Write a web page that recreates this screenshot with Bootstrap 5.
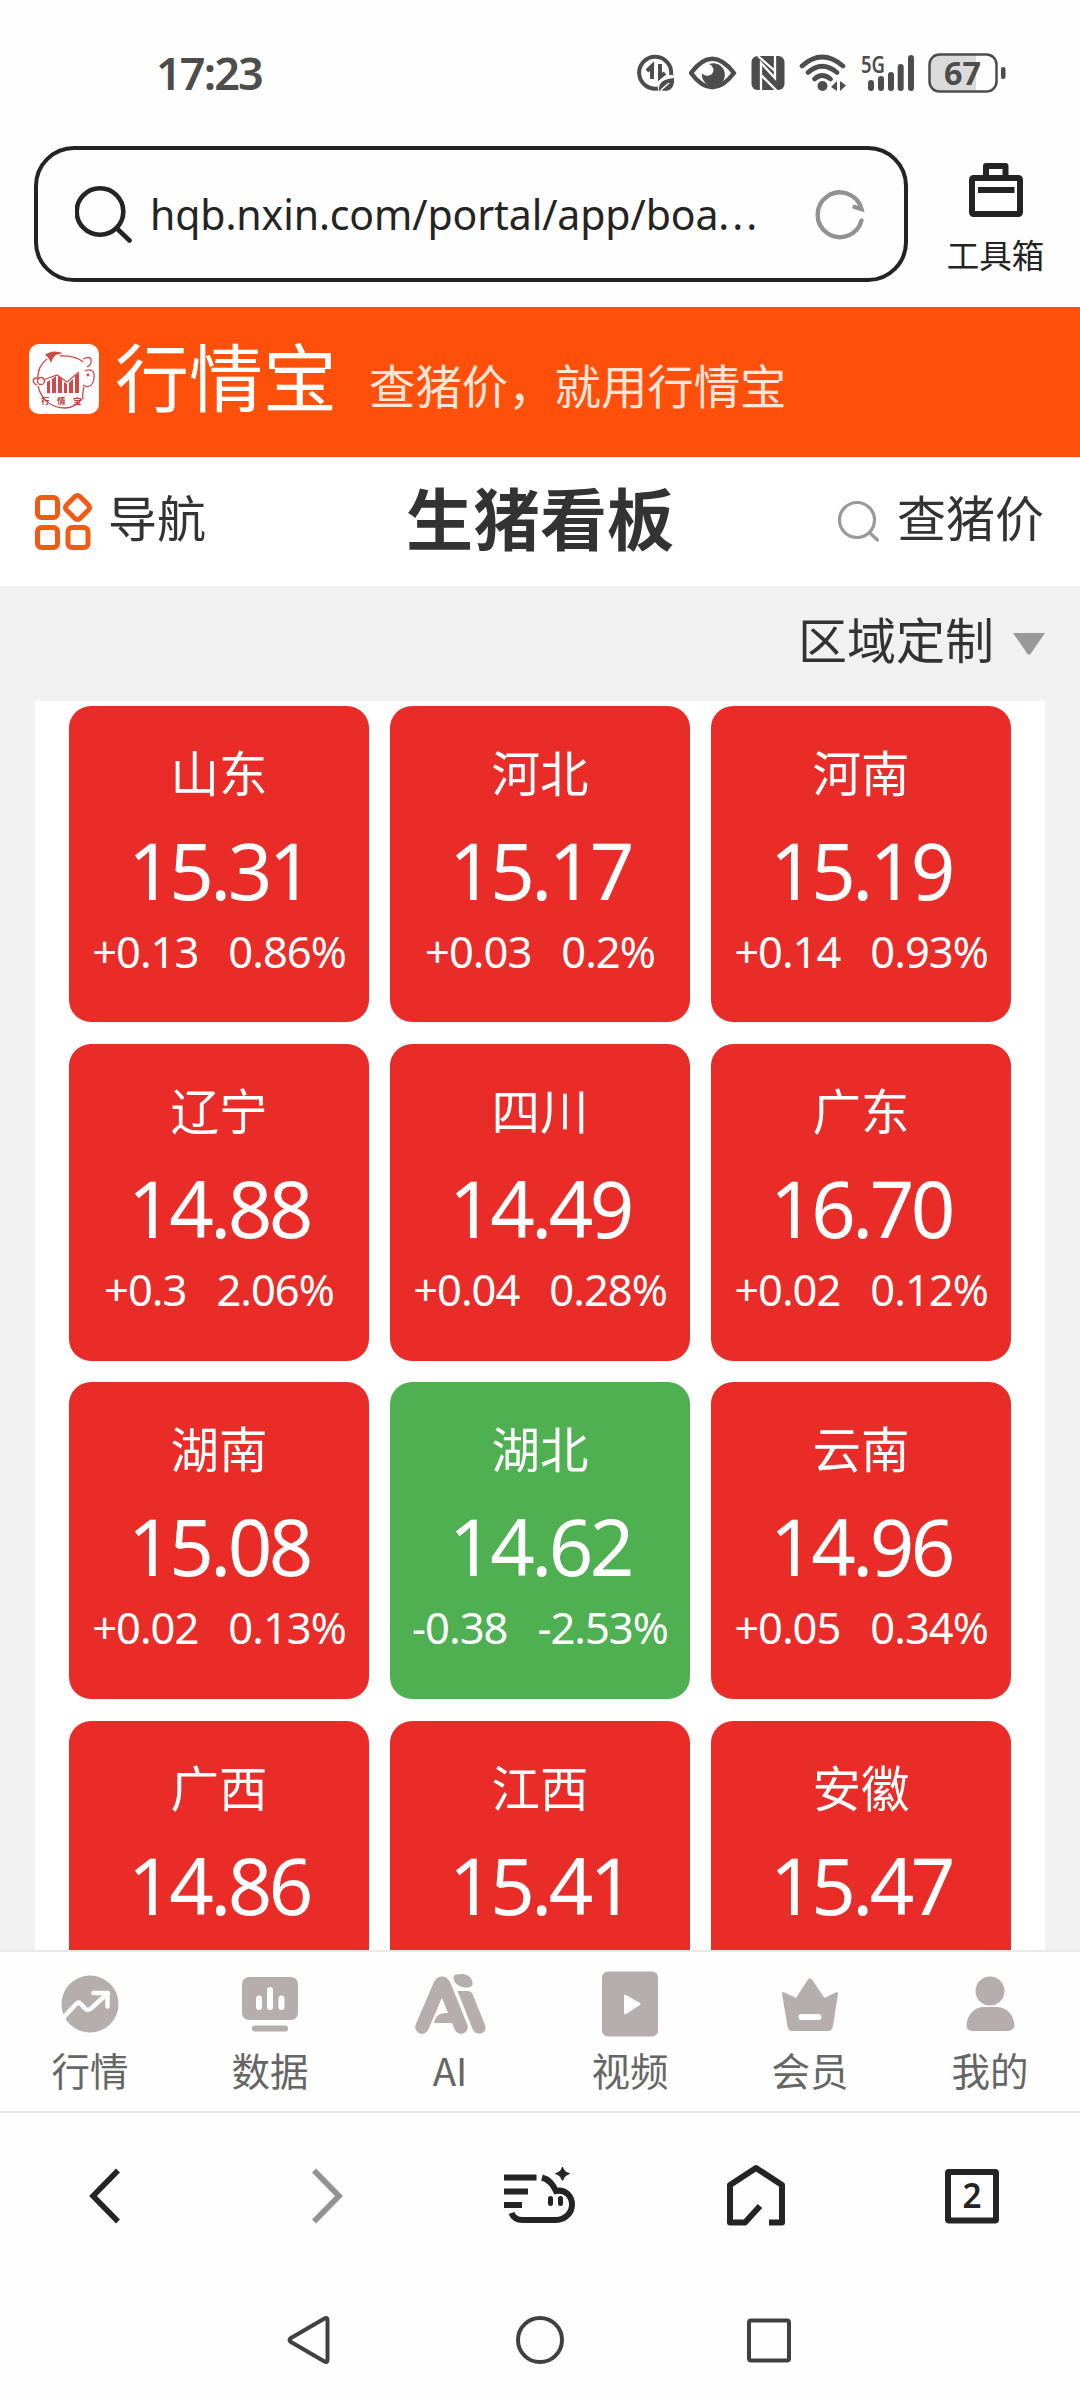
<!DOCTYPE html>
<html lang="zh-CN">
<head>
<meta charset="utf-8">
<meta name="viewport" content="width=device-width, initial-scale=1">
<title>行情宝 - 生猪看板</title>
<link rel="stylesheet" href="https://cdn.jsdelivr.net/npm/bootstrap@5.3.0/dist/css/bootstrap.min.css">
<style>
  body { width: 1080px; height: 2400px; overflow: hidden; background: #fefefe; color: #333; font-family: "Noto Sans CJK SC", sans-serif; }
  svg { display: block; flex: none; }
  .latin { font-family: "Noto Sans", "Noto Sans CJK SC", sans-serif; }
  .status-bar { height: 146px; padding: 42px 74px 0 156px; color: #4d4d4d; }
  .status-bar .clock { font-size: 45px; line-height: 62px; font-weight: 600; letter-spacing: -1.9px; }
  .status-icons { gap: 14px; }
  .address-row { height: 161px; padding-left: 34px; color: #242424; }
  .address-box { width: 874px; height: 136px; border: 4.5px solid #242424; border-radius: 40px; padding: 0 39px 0 36.5px; }
  .address-box .url { font-size: 41px; line-height: 60px; margin-left: 17.5px; margin-top: -1px; letter-spacing: -.1px; white-space: nowrap; }
  .address-box .more { letter-spacing: 3px; }
  .toolbox { width: 96px; margin-left: 39.5px; padding-top: 16px; font-size: 32.5px; line-height: 40px; }
  .brand-bar { height: 150px; background: #ff500b; padding: 0 0 7px 29px; }
  .brand-name { font-size: 74px; line-height: 80px; color: #fff; margin-left: 16px; margin-top: -10px; }
  .slogan { font-size: 46.4px; line-height: 60px; color: #ffe5da; margin-left: 32px; margin-top: 10px; white-space: nowrap; }
  .title-bar { height: 129px; padding: 0 36px 0 34px; background: #fff; font-size: 49px; }
  .title-bar .side { width: 250px; line-height: 60px; }
  .title-bar .side span { margin-top: -11px; }
  .board-title { font-size: 67px; line-height: 80px; font-weight: 700; margin: -12px 0 0 2px; }
  .board { height: 1364px; background: #f1f1f1; overflow: hidden; }
  .region { height: 115px; padding-right: 35px; font-size: 49px; line-height: 60px; }
  .region span { margin: -12px 19px 0 0; }
  .panel { margin: 0 35px; padding: 4.7px 34px 0; background: #fff; }
  .tiles { display: grid; grid-template-columns: repeat(3, 300px); grid-auto-rows: 316.8px; gap: 21.5px 21px; }
  .tile { background: #e92c27; color: #fff; border-radius: 22px; padding-top: 30px; text-align: center; white-space: nowrap; }
  .tile.down { background: #4eb051; }
  .tile .area { font-size: 48.5px; line-height: 70px; }
  .tile .price { font-size: 78px; line-height: 96px; margin-top: 16px; letter-spacing: -3.5px; }
  .tile .delta { font-size: 43.5px; line-height: 60px; margin-top: 3px; letter-spacing: -1px; gap: 30px; }
  .tab-bar { height: 163px; background: #fefefe; border-top: 2px solid #e9e9e9; border-bottom: 2px solid #e9e9e9; color: #666; font-size: 38.5px; line-height: 50px; }
  .tab-bar svg { margin-top: 15px; margin-bottom: 7px; }
  .browser-bar { height: 166px; }
  .system-bar { height: 121px; padding: 0 272px 0 271px; }
</style>
</head>
<body class="d-flex flex-column">

<div class="status-bar d-flex align-items-start justify-content-between flex-shrink-0">
  <span class="clock latin">17:23</span>
  <div class="status-icons d-flex">
    <svg width="38" height="62" viewBox="637 42 38 62" fill="none" stroke="#4d4d4d" stroke-width="4">
      <path d="M658 88.5A16 16 0 1 1 671 75"/>
      <path d="M647 71L652 66V79M660 64V77L665 73" stroke-width="4"/>
      <path d="M659 91C658 82 664 79 674 78C675 88 669 93 661 90Z" fill="#4d4d4d" stroke="none"/>
      <path d="M661 90L669 83" stroke="#fff" stroke-width="1.5"/>
    </svg>
    <svg width="48" height="62" viewBox="689 42 48 62">
      <path d="M691 73Q712 44.500 734 73Q712 101.500 691 73Z" fill="none" stroke="#4d4d4d" stroke-width="4.500" stroke-linejoin="round"/>
      <path d="M709 64A11.500 11.500 0 1 1 702 73C704 76 708 77 712 74C715 70 713 66 709 64Z" fill="#4d4d4d"/>
    </svg>
    <svg width="34" height="62" viewBox="751 42 34 62">
      <rect x="751.500" y="56" width="33" height="34" rx="6" fill="#4d4d4d"/>
      <path d="M761 90V63L775 78V56" fill="none" stroke="#fff" stroke-width="2.300"/>
      <path d="M758 56L775 71M761 75L777 91" stroke="#fff" stroke-width="2.300"/>
    </svg>
    <svg width="48" height="62" viewBox="799 42 48 62" fill="none" stroke="#4d4d4d" stroke-width="4.600" stroke-linecap="round">
      <path d="M802 66Q822 48 843 66M808 72.500Q822 60 837 72.500M814.500 79Q822 72 830.500 79"/>
      <circle cx="822.500" cy="86" r="5" fill="#4d4d4d" stroke="none"/>
      <path d="M831 87L837 81V91M840 81V91L846 85.500Z" fill="#4d4d4d" stroke="none"/>
    </svg>
    <svg width="53" height="62" viewBox="861 42 53 62">
      <g stroke="#4d4d4d" stroke-width="6" stroke-linecap="round"><path d="M871 83V88M881 79V88M891 75V88M900.700 67V88M911 58V88"/></g>
      <text x="861" y="72.500" font-family="Noto Sans" font-size="23.500" font-weight="600" fill="#4d4d4d" textLength="24" lengthAdjust="spacingAndGlyphs">5G</text>
    </svg>
    <svg width="78" height="62" viewBox="928 42 78 62">
      <path d="M939 55H976V91H939Q930 91 930 81V65Q930 55 939 55Z" fill="#dadada"/>
      <rect x="929.500" y="54.500" width="67" height="37" rx="10" fill="none" stroke="#4d4d4d" stroke-width="2.500"/>
      <rect x="1001" y="67" width="4.500" height="12" rx="2" fill="#4d4d4d"/>
      <text x="944" y="84.500" font-family="Noto Sans" font-size="33" font-weight="700" fill="#4d4d4d" textLength="37" lengthAdjust="spacingAndGlyphs">67</text>
    </svg>
  </div>
</div>

<div class="address-row d-flex align-items-start flex-shrink-0">
  <div class="address-box d-flex align-items-center">
    <svg width="58" height="58" viewBox="75 186 58 58" fill="none" stroke="#242424" stroke-width="4.600" stroke-linecap="round"><circle cx="100" cy="212.500" r="23.300"/><path d="M118 230.500L129.500 241.500"/></svg>
    <span class="url latin">hqb.nxin.com/portal/app/boa<span class="more">...</span></span>
    <svg class="ms-auto" width="50" height="52" viewBox="815 188 50 52" fill="none" stroke="#929292" stroke-width="4.400" stroke-linecap="round"><path d="M861.500 220.500A22.300 22.300 0 1 1 861.500 209L854.500 207"/></svg>
  </div>
  <div class="toolbox d-flex flex-column align-items-center text-nowrap">
    <svg width="56" height="56" viewBox="968 162 56 56" fill="none" stroke="#242424" stroke-width="6"><rect x="972" y="178" width="48" height="36" rx="1.500"/><path d="M978 190H1014.500M986 177V166H1005.500V177" stroke-linejoin="round"/></svg>
    <span class="mt-3">工具箱</span>
  </div>
</div>

<header class="brand-bar d-flex align-items-center flex-shrink-0">
  <svg width="70" height="70" viewBox="0 0 70 70">
    <rect width="70" height="70" rx="10" fill="#fff"/>
    <g fill="none" stroke="#cf4a48" stroke-width="1.300">
      <path d="M9 36C8 27 12 19 18 15M31 12C40 11 50 14 54 18M54 15Q60 12 62 15Q63 21 58 23M56 27C62 24 66 27 65 34C64 43 58 44 54 41M55 43Q53 51 54 55"/>
      <path d="M8 41C3 39 3 34 8 34M9 42C12 55 22 64 36 64C42 64 48 61 53 55"/>
      <circle cx="12" cy="37" r="3.500"/><path d="M14 36L28 31L38 38L50 28"/><circle cx="59" cy="31" r=".8"/>
    </g>
    <path d="M16 11Q23 5 34 9L27 11Q24 13 22 19Q20 13 16 11Z" fill="#cf4a48"/>
    <path d="M18 49V38L21 36V49ZM23 49V35L27 32V49ZM29 49V32L33 35V49ZM35 49V38L38 40V49ZM40 49V39L44 35V49ZM46 49V32L50 29V49Z" fill="#cf4a48"/>
    <text x="12" y="60" font-family="Noto Sans CJK SC" font-size="8.500" font-weight="700" fill="#b9403f" letter-spacing="7.500">行情宝</text>
  </svg>
  <span class="brand-name">行情宝</span>
  <span class="slogan">查猪价，就用行情宝</span>
</header>

<nav class="title-bar d-flex align-items-center justify-content-between flex-shrink-0">
  <div class="side d-flex align-items-center">
    <svg width="58" height="60" viewBox="34 492 58 60" fill="none" stroke="#f45a14" stroke-width="5"><rect x="37.500" y="497.500" width="20" height="20" rx="4"/><rect x="37.500" y="527.500" width="20" height="20" rx="4"/><rect x="68" y="527.500" width="20" height="20" rx="4"/><rect x="68" y="498" width="19" height="19" rx="3.500" transform="rotate(45 77.500 507.500)"/></svg>
    <span class="ms-3">导航</span>
  </div>
  <h1 class="board-title">生猪看板</h1>
  <div class="side d-flex align-items-center justify-content-end">
    <svg width="44" height="44" viewBox="835 499 44 44" fill="none" stroke="#999" stroke-width="3.200" stroke-linecap="round"><circle cx="855" cy="519" r="17.500"/><path d="M868 532L875.500 539"/></svg>
    <span class="ms-3">查猪价</span>
  </div>
</nav>

<main class="board flex-shrink-0">
  <div class="region d-flex align-items-center justify-content-end">
    <span>区域定制</span>
    <svg width="32" height="22" viewBox="0 0 32 22"><path d="M0 0H32L17.500 21Q16 22.500 14.500 21Z" fill="#999"/></svg>
  </div>
  <div class="panel">
    <div class="tiles">
      <div class="tile"><div class="area">山东</div><div class="price latin">15.31</div><div class="delta latin d-flex justify-content-center"><span>+0.13</span><span>0.86%</span></div></div>
      <div class="tile"><div class="area">河北</div><div class="price latin">15.17</div><div class="delta latin d-flex justify-content-center"><span>+0.03</span><span>0.2%</span></div></div>
      <div class="tile"><div class="area">河南</div><div class="price latin">15.19</div><div class="delta latin d-flex justify-content-center"><span>+0.14</span><span>0.93%</span></div></div>
      <div class="tile"><div class="area">辽宁</div><div class="price latin">14.88</div><div class="delta latin d-flex justify-content-center"><span>+0.3</span><span>2.06%</span></div></div>
      <div class="tile"><div class="area">四川</div><div class="price latin">14.49</div><div class="delta latin d-flex justify-content-center"><span>+0.04</span><span>0.28%</span></div></div>
      <div class="tile"><div class="area">广东</div><div class="price latin">16.70</div><div class="delta latin d-flex justify-content-center"><span>+0.02</span><span>0.12%</span></div></div>
      <div class="tile"><div class="area">湖南</div><div class="price latin">15.08</div><div class="delta latin d-flex justify-content-center"><span>+0.02</span><span>0.13%</span></div></div>
      <div class="tile down"><div class="area">湖北</div><div class="price latin">14.62</div><div class="delta latin d-flex justify-content-center"><span>-0.38</span><span>-2.53%</span></div></div>
      <div class="tile"><div class="area">云南</div><div class="price latin">14.96</div><div class="delta latin d-flex justify-content-center"><span>+0.05</span><span>0.34%</span></div></div>
      <div class="tile"><div class="area">广西</div><div class="price latin">14.86</div></div>
      <div class="tile"><div class="area">江西</div><div class="price latin">15.41</div></div>
      <div class="tile"><div class="area">安徽</div><div class="price latin">15.47</div></div>
    </div>
  </div>
</main>

<nav class="tab-bar row g-0 flex-shrink-0 text-center">
  <div class="col d-flex flex-column align-items-center">
    <svg width="72" height="70" viewBox="0 0 72 70"><circle cx="36" cy="37" r="28.500" fill="#b6aeac"/><path d="M8 52L22 37Q24.500 34.500 27 37L31 41.500Q34 44.500 37 41.500L54 26M39.500 26H53.500V39.500" fill="none" stroke="#fff" stroke-width="4.500" stroke-linecap="round" stroke-linejoin="round"/></svg>
    <span>行情</span>
  </div>
  <div class="col d-flex flex-column align-items-center">
    <svg width="72" height="70" viewBox="0 0 72 70"><rect x="8" y="10" width="56" height="43" rx="7" fill="#b6aeac"/><path d="M25 31.500V40M36 23V40M47.500 31.500V40" stroke="#fff" stroke-width="6" stroke-linecap="round"/><path d="M21 61.500H51" stroke="#b6aeac" stroke-width="6" stroke-linecap="round"/></svg>
    <span>数据</span>
  </div>
  <div class="col d-flex flex-column align-items-center">
    <svg width="72" height="70" viewBox="0 0 72 70"><path d="M8 60L26 18Q28 14.500 30 18L47 60" fill="none" stroke="#b6aeac" stroke-width="13.500" stroke-linecap="round"/><path d="M20 56Q22 46 31 46H41L46 60Q43 56 38 56Z" fill="#b6aeac"/><path d="M43.500 24H53Q57 24 58.500 27L71 58C73 64 68 67 65 66.500Q61 66.500 59 63Z" fill="#b6aeac"/><path d="M40 8.500Q42 7 48 7C55 7 59 12 58.500 18Q57 21 50 20.500C43 19 38 14 40 8.500Z" fill="#b6aeac"/></svg>
    <span>AI</span>
  </div>
  <div class="col d-flex flex-column align-items-center">
    <svg width="72" height="70" viewBox="0 0 72 70"><rect x="8" y="4.500" width="56" height="65" rx="6" fill="#b6aeac"/><path d="M30 29Q30 27 32 28L46 36Q47 37 46 38L32 47Q30 48 30 46Z" fill="#fff"/></svg>
    <span>视频</span>
  </div>
  <div class="col d-flex flex-column align-items-center">
    <svg width="72" height="70" viewBox="0 0 72 70"><path d="M33 14Q36 8.500 39 14L50.500 31L61.500 25.500Q64.500 24 64 27L59 59Q58 64 53.500 64H18.500Q14 64 13.500 59L8 27Q8 24 10.500 25.500L22 31Z" fill="#b6aeac"/><path d="M27.500 50H44.500" stroke="#fff" stroke-width="6" stroke-linecap="round"/></svg>
    <span>会员</span>
  </div>
  <div class="col d-flex flex-column align-items-center">
    <svg width="72" height="70" viewBox="0 0 72 70"><circle cx="36" cy="24" r="14.500" fill="#b6aeac"/><path d="M28 40H44C54 41 60 49 60.500 58Q60 64 52 64H20Q12 64 12.500 58C13 49 19 41 28 40Z" fill="#b6aeac"/></svg>
    <span>我的</span>
  </div>
</nav>

<nav class="browser-bar d-flex flex-shrink-0">
  <svg width="216" height="166" viewBox="0 2113 216 166"><path d="M118 2170.500L93 2196L118 2221.500" fill="none" stroke="#242424" stroke-width="5.600"/></svg>
  <svg width="216" height="166" viewBox="216 2113 216 166"><path d="M314 2170.500L339 2196L314 2221.500" fill="none" stroke="#929292" stroke-width="5.600"/></svg>
  <svg width="216" height="166" viewBox="432 2113 216 166" fill="none" stroke="#242424" stroke-width="6">
    <path d="M504 2177.500H536.500M504 2191.500H528M504 2205H522M542 2177.500Q551 2180 556 2191C565 2189 572 2196 572 2204.500C572 2213 565 2220 556 2220H523Q514 2220 511.500 2213"/>
    <path d="M550.500 2198.500V2203.500M560.500 2198.500V2203.500" stroke-width="5" stroke-linecap="round"/>
    <path d="M562.500 2167Q564 2172.500 569.500 2173.500Q564 2175 562.500 2180.500Q561 2175 555.500 2173.500Q561 2172.500 562.500 2167Z" fill="#242424" stroke="#242424" stroke-width="1"/>
  </svg>
  <svg width="216" height="166" viewBox="648 2113 216 166"><path d="M760 2206L745 2222.500H730V2185L756 2168L782 2185V2222.500H769" fill="none" stroke="#242424" stroke-width="6" stroke-linejoin="round"/></svg>
  <svg width="216" height="166" viewBox="864 2113 216 166"><rect x="948" y="2172" width="48" height="48.500" rx="1" fill="none" stroke="#242424" stroke-width="6"/><text x="972" y="2208" text-anchor="middle" font-family="Noto Sans" font-size="35" font-weight="600" fill="#242424" textLength="19" lengthAdjust="spacingAndGlyphs">2</text></svg>
</nav>

<nav class="system-bar d-flex justify-content-between align-items-center flex-shrink-0">
  <svg width="76" height="50" viewBox="271 2315 76 50"><path d="M324.500 2318.500Q327.500 2317 327.500 2320V2360Q327.500 2363 324.500 2361.500L291 2342Q288 2340 291 2338Z" fill="none" stroke="#404040" stroke-width="4"/></svg>
  <svg width="50" height="50" viewBox="515 2315 50 50"><circle cx="540" cy="2340" r="22" fill="none" stroke="#404040" stroke-width="4"/></svg>
  <svg width="76" height="50" viewBox="732 2315 76 50"><rect x="749" y="2320.500" width="40" height="40" rx="2" fill="none" stroke="#404040" stroke-width="4"/></svg>
</nav>

<script src="https://cdn.jsdelivr.net/npm/bootstrap@5.3.0/dist/js/bootstrap.bundle.min.js"></script>
</body>
</html>
